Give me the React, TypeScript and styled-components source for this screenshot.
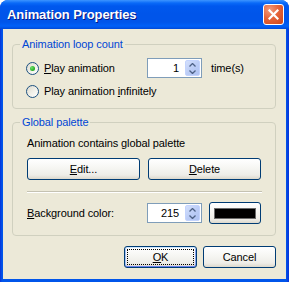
import React from "react";
import styled, { createGlobalStyle, css } from "styled-components";

const GlobalStyle = createGlobalStyle`
  html, body { margin: 0; padding: 0; background: #ffffff; }
  * { box-sizing: border-box; }
`;

const FONT = `"Liberation Sans", Arial, sans-serif`;

const Window = styled.div`
  width: 289px;
  height: 282px;
  display: flex;
  flex-direction: column;
  border-radius: 8px 8px 0 0;
  overflow: hidden;
  background: linear-gradient(90deg, #0831d9 0px, #0055ea 2px, #0055ea 286px, #0831d9 289px);
  font-family: ${FONT};
  font-size: 11px;
  letter-spacing: -0.1px;
  color: #000;
`;

const TitleBar = styled.div`
  height: 29px;
  flex: none;
  display: flex;
  align-items: center;
  padding: 0 5px 1px 7px;
  background: linear-gradient(
    180deg,
    #3d95ff 0px,
    #0a6af8 3px,
    #0058ee 6px,
    #0055ea 14px,
    #0055ea 22px,
    #0060f8 26px,
    #0052e4 28px,
    #0047d6 29px
  );
`;

const Title = styled.div`
  flex: 1;
  color: #ffffff;
  font-family: ${FONT};
  font-weight: bold;
  font-size: 13px;
  letter-spacing: -0.1px;
  text-shadow: 1px 1px 0 #0a1883;
`;

const CloseButton = styled.div`
  width: 21px;
  height: 21px;
  border: 1px solid #ffffff;
  border-radius: 3px;
  background: radial-gradient(circle at 30% 25%, #f29a7b 0%, #e5643a 45%, #cc4418 100%);
  display: grid;
  place-items: center;
`;

const Client = styled.div`
  flex: 1;
  margin: 0 3px 3px 3px;
  background: #ece9d8;
  padding: 8px 10px 0 9px;
  display: flex;
  flex-direction: column;
`;

const Group = styled.fieldset<{ $gap?: number }>`
  margin: 0 0 ${(p) => p.$gap ?? 0}px 0;
  padding: 0;
  min-width: 0;
  border: 1px solid #d0d0bf;
  border-radius: 4px;
`;

const Legend = styled.legend`
  margin-left: 7px;
  padding: 0 2px;
  color: #0046d5;
  font-size: 11px;
  line-height: 14px;
`;

const GroupBody = styled.div<{ $pad: string }>`
  padding: ${(p) => p.$pad};
  display: flex;
  flex-direction: column;
`;

const Row = styled.div<{ $h: number; $mb?: number }>`
  height: ${(p) => p.$h}px;
  margin-bottom: ${(p) => p.$mb ?? 0}px;
  display: flex;
  align-items: center;
`;

const RadioLabel = styled.label<{ $w?: number }>`
  display: flex;
  align-items: center;
  gap: 5px;
  width: ${(p) => (p.$w ? `${p.$w}px` : "auto")};
  line-height: 14px;
`;

const RadioCircle = styled.span`
  width: 13px;
  height: 13px;
  border-radius: 50%;
  border: 1px solid #1c5180;
  background: linear-gradient(135deg, #dcd9cd 0%, #f2f1ea 55%, #ffffff 100%);
  display: grid;
  place-items: center;
  flex: none;
`;

const RadioDot = styled.span`
  width: 5px;
  height: 5px;
  border-radius: 50%;
  background: radial-gradient(circle at 35% 35%, #6ee06a 0%, #2bb12b 60%, #1a8f1a 100%);
`;

const SpinBox = styled.div`
  width: 55px;
  height: 20px;
  border: 1px solid #7f9db9;
  background: #ffffff;
  display: flex;
  align-items: stretch;
  padding: 1px;
`;

const SpinValue = styled.div`
  flex: 1;
  display: flex;
  align-items: center;
  justify-content: flex-end;
  padding-right: 6px;
  line-height: 14px;
`;

const SpinButtons = styled.div`
  width: 15px;
  display: flex;
  flex-direction: column;
  border-radius: 2px;
  background: linear-gradient(135deg, #d4e0fc 0%, #bccdf6 50%, #aec2f2 100%);
  border: 1px solid #c3d3fd;
`;

const SpinHalf = styled.div`
  flex: 1;
  display: grid;
  place-items: center;
`;

const Suffix = styled.span`
  margin-left: 9px;
  line-height: 14px;
`;

const Text = styled.div`
  line-height: 14px;
  margin-bottom: 8px;
`;

const ButtonGrid = styled.div`
  display: grid;
  grid-template-columns: 113px 113px;
  column-gap: 8px;
`;

const XPButton = styled.button<{ $w?: number; $h?: number; $default?: boolean }>`
  width: ${(p) => (p.$w ? `${p.$w}px` : "100%")};
  height: ${(p) => p.$h ?? 22}px;
  margin: 0;
  padding: 0;
  font-family: ${FONT};
  font-size: 11px;
  letter-spacing: -0.1px;
  color: #000;
  border: 1px solid #003c74;
  border-radius: 3px;
  background: linear-gradient(180deg, #ffffff 0%, #f7f7f4 40%, #eeede8 80%, #dcd8cc 100%);
  display: flex;
  align-items: center;
  justify-content: center;
  ${(p) =>
    p.$default &&
    css`
      box-shadow: inset 0 1px 0 #cee7ff, inset 0 -1px 0 #6982ee, inset 1px 0 0 #a6c1f4,
        inset -1px 0 0 #8ba6ef;
      outline: 1px dotted #000;
      outline-offset: -4px;
    `}
`;

const Separator = styled.div`
  height: 2px;
  border-top: 1px solid #c5c2b2;
  border-bottom: 1px solid #ffffff;
  margin: 11px 0 9px 0;
`;

const BottomRow = styled.div`
  height: 22px;
  display: grid;
  grid-template-columns: 113px 55px 52px;
  column-gap: 7px;
  align-items: center;
`;

const Swatch = styled.span`
  width: 42px;
  height: 11px;
  background: #000;
  border: 1px solid #6b6b6b;
`;

const Footer = styled.div`
  display: flex;
  justify-content: flex-end;
  gap: 6px;
  margin-top: 10px;
`;

const Up = () => (
  <svg width="7" height="4" viewBox="0 0 7 4">
    <path d="M0.5 3.5 L3.5 0.5 L6.5 3.5" fill="none" stroke="#4d6185" strokeWidth="1.3" />
  </svg>
);
const Down = () => (
  <svg width="7" height="4" viewBox="0 0 7 4">
    <path d="M0.5 0.5 L3.5 3.5 L6.5 0.5" fill="none" stroke="#4d6185" strokeWidth="1.3" />
  </svg>
);

const Spin: React.FC<{ value: string }> = ({ value }) => (
  <SpinBox>
    <SpinValue>{value}</SpinValue>
    <SpinButtons>
      <SpinHalf>
        <Up />
      </SpinHalf>
      <SpinHalf>
        <Down />
      </SpinHalf>
    </SpinButtons>
  </SpinBox>
);

export default function App() {
  return (
    <>
      <GlobalStyle />
      <Window>
        <TitleBar>
          <Title>Animation Properties</Title>
          <CloseButton>
            <svg width="11" height="11" viewBox="0 0 11 11">
              <path d="M1.5 1.5 L9.5 9.5 M9.5 1.5 L1.5 9.5" stroke="#fff" strokeWidth="2.2" strokeLinecap="square" />
            </svg>
          </CloseButton>
        </TitleBar>
        <Client>
          <Group $gap={6}>
            <Legend>Animation loop count</Legend>
            <GroupBody $pad="7px 13px 10px 13px">
              <Row $h={20} $mb={6}>
                <RadioLabel $w={121}>
                  <RadioCircle>
                    <RadioDot />
                  </RadioCircle>
                  <span>
                    <u>P</u>lay animation
                  </span>
                </RadioLabel>
                <Spin value="1" />
                <Suffix>time(s)</Suffix>
              </Row>
              <Row $h={14}>
                <RadioLabel>
                  <RadioCircle />
                  <span>
                    Play animation <u>i</u>nfinitely
                  </span>
                </RadioLabel>
              </Row>
            </GroupBody>
          </Group>
          <Group>
            <Legend>Global palette</Legend>
            <GroupBody $pad="7px 13px 11px 14px">
              <Text>Animation contains global palette</Text>
              <ButtonGrid>
                <XPButton>
                  <span>
                    <u>E</u>dit...
                  </span>
                </XPButton>
                <XPButton>
                  <span>
                    <u>D</u>elete
                  </span>
                </XPButton>
              </ButtonGrid>
              <Separator />
              <BottomRow>
                <span>
                  <u>B</u>ackground color:
                </span>
                <Spin value="215" />
                <XPButton $h={22}>
                  <Swatch />
                </XPButton>
              </BottomRow>
            </GroupBody>
          </Group>
          <Footer>
            <XPButton $w={73} $default>
              <span>
                <u>O</u>K
              </span>
            </XPButton>
            <XPButton $w={73}>Cancel</XPButton>
          </Footer>
        </Client>
      </Window>
    </>
  );
}
